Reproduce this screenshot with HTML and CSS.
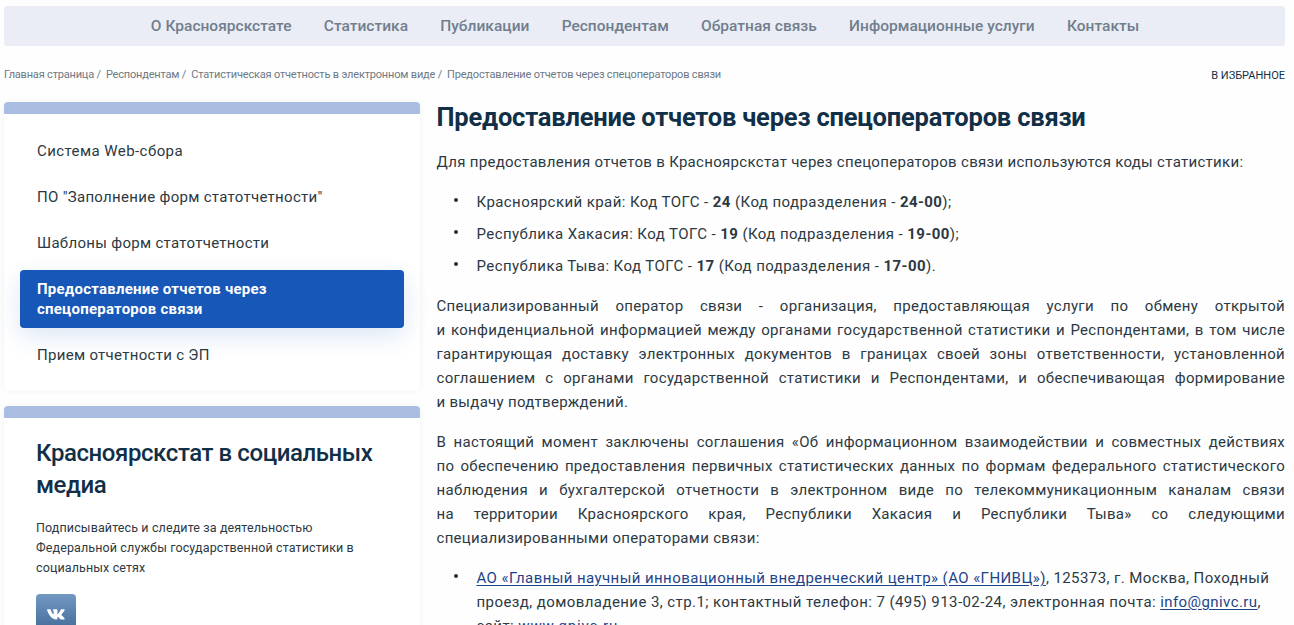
FILE: index.html
```html
<!DOCTYPE html>
<html lang="ru">
<head>
<meta charset="utf-8">
<title>Предоставление отчетов через спецоператоров связи</title>
<link rel="stylesheet" href="styles.css">
</head>
<body>
<nav class="nav">
  <a>О Красноярскстате</a><a>Статистика</a><a>Публикации</a><a>Респондентам</a><a>Обратная связь</a><a>Информационные услуги</a><a>Контакты</a>
</nav>
<div class="subbar">
  <div class="crumbs"><span>Главная страница /</span><span>Респондентам /</span><span>Статистическая отчетность в электронном виде /</span><span>Предоставление отчетов через спецоператоров связи</span></div>
  <a class="favorite">В ИЗБРАННОЕ</a>
</div>
<div class="layout">
  <aside class="sidebar">
    <section class="card menu">
      <a class="wide">Система Web-сбора</a>
      <a>ПО "Заполнение форм статотчетности"</a>
      <a>Шаблоны форм статотчетности</a>
      <a class="active">Предоставление отчетов через<br>спецоператоров связи</a>
      <a>Прием отчетности с ЭП</a>
    </section>
    <section class="card social">
      <h2>Красноярскстат в социальных<br>медиа</h2>
      <p>Подписывайтесь и следите за деятельностью<br>Федеральной службы государственной статистики в<br>социальных сетях</p>
      <a class="vk"><svg width="18" height="11" viewBox="0 0 18 11"><path d="M0 .8Q0 .3.5.3H3q.6 0 .8.6Q5 4.2 6.100 5.300q.5.4.5-.3V2.500Q6.600 1.500 5.700.8 5.500.2 6.200.2h3.500q.7 0 .7.8v3.700q0 .7.6.2Q12.500 3.300 13.600.9q.2-.6.800-.6h2.700q.9 0 .6.8-.5 1.200-3.100 4.200-.4.500.1 1 2.500 2.200 2.900 3.300.3.900-.6.900h-2.700q-.7 0-1.200-.5-1.500-1.800-2.200-2-.5-.1-.5.7v1q0 .8-.9.8Q5.500 10.500 3.100 7.100.7 3.800 0 .8Z" fill="#fff"/></svg></a>
    </section>
  </aside>
  <main class="content">
    <h1>Предоставление отчетов через спецоператоров связи</h1>
    <p><span class="line">Для предоставления отчетов в Красноярскстат через спецоператоров связи используются коды статистики:</span></p>
    <ul class="codes">
      <li>Красноярский край: Код ТОГС - <b>24</b> (Код подразделения - <b>24-00</b>);</li>
      <li>Республика Хакасия: Код ТОГС - <b>19</b> (Код подразделения - <b>19-00</b>);</li>
      <li>Республика Тыва: Код ТОГС - <b>17</b> (Код подразделения - <b>17-00</b>).</li>
    </ul>
    <p>
      <span class="line full">Специализированный оператор связи - организация, предоставляющая услуги по обмену открытой</span>
      <span class="line full">и конфиденциальной информацией между органами государственной статистики и Респондентами, в том числе</span>
      <span class="line full">гарантирующая доставку электронных документов в границах своей зоны ответственности, установленной</span>
      <span class="line full">соглашением с органами государственной статистики и Респондентами, и обеспечивающая формирование</span>
      <span class="line">и выдачу подтверждений.</span>
    </p>
    <p>
      <span class="line full">В настоящий момент заключены соглашения «Об информационном взаимодействии и совместных действиях</span>
      <span class="line full">по обеспечению предоставления первичных статистических данных по формам федерального статистического</span>
      <span class="line full">наблюдения и бухгалтерской отчетности в электронном виде по телекоммуникационным каналам связи</span>
      <span class="line full">на территории Красноярского края, Республики Хакасия и Республики Тыва» со следующими</span>
      <span class="line">специализированными операторами связи:</span>
    </p>
    <ul class="operators">
      <li>
        <span class="line"><a>АО «Главный научный инновационный внедренческий центр» (АО «ГНИВЦ»)</a>, 125373, г. Москва, Походный</span>
        <span class="line">проезд, домовладение 3, стр.1; контактный телефон: 7 (495) 913-02-24, электронная почта: <a>info@gnivc.ru</a>,</span>
        <span class="line">сайт: <a class="site">www.gnivc.ru</a></span>
      </li>
    </ul>
  </main>
</div>
</body>
</html>
```
FILE: styles.css
```css
* { box-sizing: border-box; }
body {
  margin: 0;
  padding: 6px 9px 0 4px;
  height: 625px;
  overflow: hidden;
  background: #fefefe;
  color: #2c3943;
  font: 15px/24px Roboto, "Noto Sans", sans-serif;
}
h1, h2, p, ul { margin: 0; padding: 0; }
.nav {
  display: flex;
  justify-content: center;
  gap: 32.2px;
  height: 40px;
  padding-left: 1px;
  border-radius: 3px;
  background: #eaedf5;
  color: #717e8d;
  font-size: 15.5px;
  font-weight: 500;
  letter-spacing: .02px;
  line-height: 40px;
  white-space: nowrap;
}
.subbar {
  display: flex;
  justify-content: space-between;
  height: 56px;
  padding-top: 17px;
  font-size: 11px;
  white-space: nowrap;
}
.crumbs { display: flex; gap: 5px; letter-spacing: -.185px; color: #6d7985; }
.favorite { color: #112f47; padding-top: 1px; }
.layout { display: grid; grid-template-columns: 416px 848.5px; gap: 16.5px; }
.sidebar { display: flex; flex-direction: column; gap: 16px; }
.card {
  border-top: 12px solid #aabee1;
  border-radius: 4px;
  background: #fff;
  box-shadow: 0 0 6px rgba(40, 50, 70, .06);
}
.menu { height: 288px; padding: 14px 16px; }
.menu a {
  display: block;
  padding: 13px 17px;
  line-height: 20px;
  letter-spacing: .3px;
  white-space: nowrap;
}
.menu .wide { letter-spacing: .43px; }
.menu .active {
  margin-top: 4px;
  padding: 9px 17px;
  border-radius: 4px;
  background: #1757b8;
  color: #fff;
  font-weight: 700;
  letter-spacing: .23px;
  box-shadow: 0 8px 24px rgba(23, 87, 184, .15);
}
.menu .active + a { padding-top: 17px; }
.social { height: 260px; padding: 19px 32px; white-space: nowrap; }
.social h2 {
  color: #112f47;
  font-size: 24px;
  line-height: 32px;
  font-weight: 500;
  letter-spacing: -.42px;
}
.social p { margin-top: 17px; font-size: 12.5px; line-height: 20px; letter-spacing: .12px; }
.vk {
  display: flex;
  justify-content: center;
  width: 40px;
  height: 40px;
  margin-top: 16px;
  padding-top: 15px;
  border-radius: 4px;
  background: linear-gradient(#7199c2, #416895);
}
.content { letter-spacing: .3px; }
.content h1 {
  margin-top: -1px;
  color: #112f47;
  font-size: 25.5px;
  line-height: 32px;
  font-weight: 700;
  letter-spacing: -.21px;
  white-space: nowrap;
}
.content h1 + p { margin-top: 17px; }
.line { display: block; white-space: nowrap; }
.full { text-align-last: justify; white-space: normal; letter-spacing: .3px; }
ul { list-style: none; }
li { position: relative; padding-left: 40px; white-space: nowrap; letter-spacing: .42px; }
li::before {
  content: "";
  position: absolute;
  left: 17px;
  top: 8px;
  width: 4px;
  height: 4px;
  border-radius: 50%;
  background: #28353f;
}
.codes { display: grid; gap: 8px; margin: 16px 0; }
.content p + p, .operators { margin-top: 16px; }
li a { color: #1d4489; text-decoration: underline; text-underline-offset: 2px; }
li .site { letter-spacing: .85px; }
```
